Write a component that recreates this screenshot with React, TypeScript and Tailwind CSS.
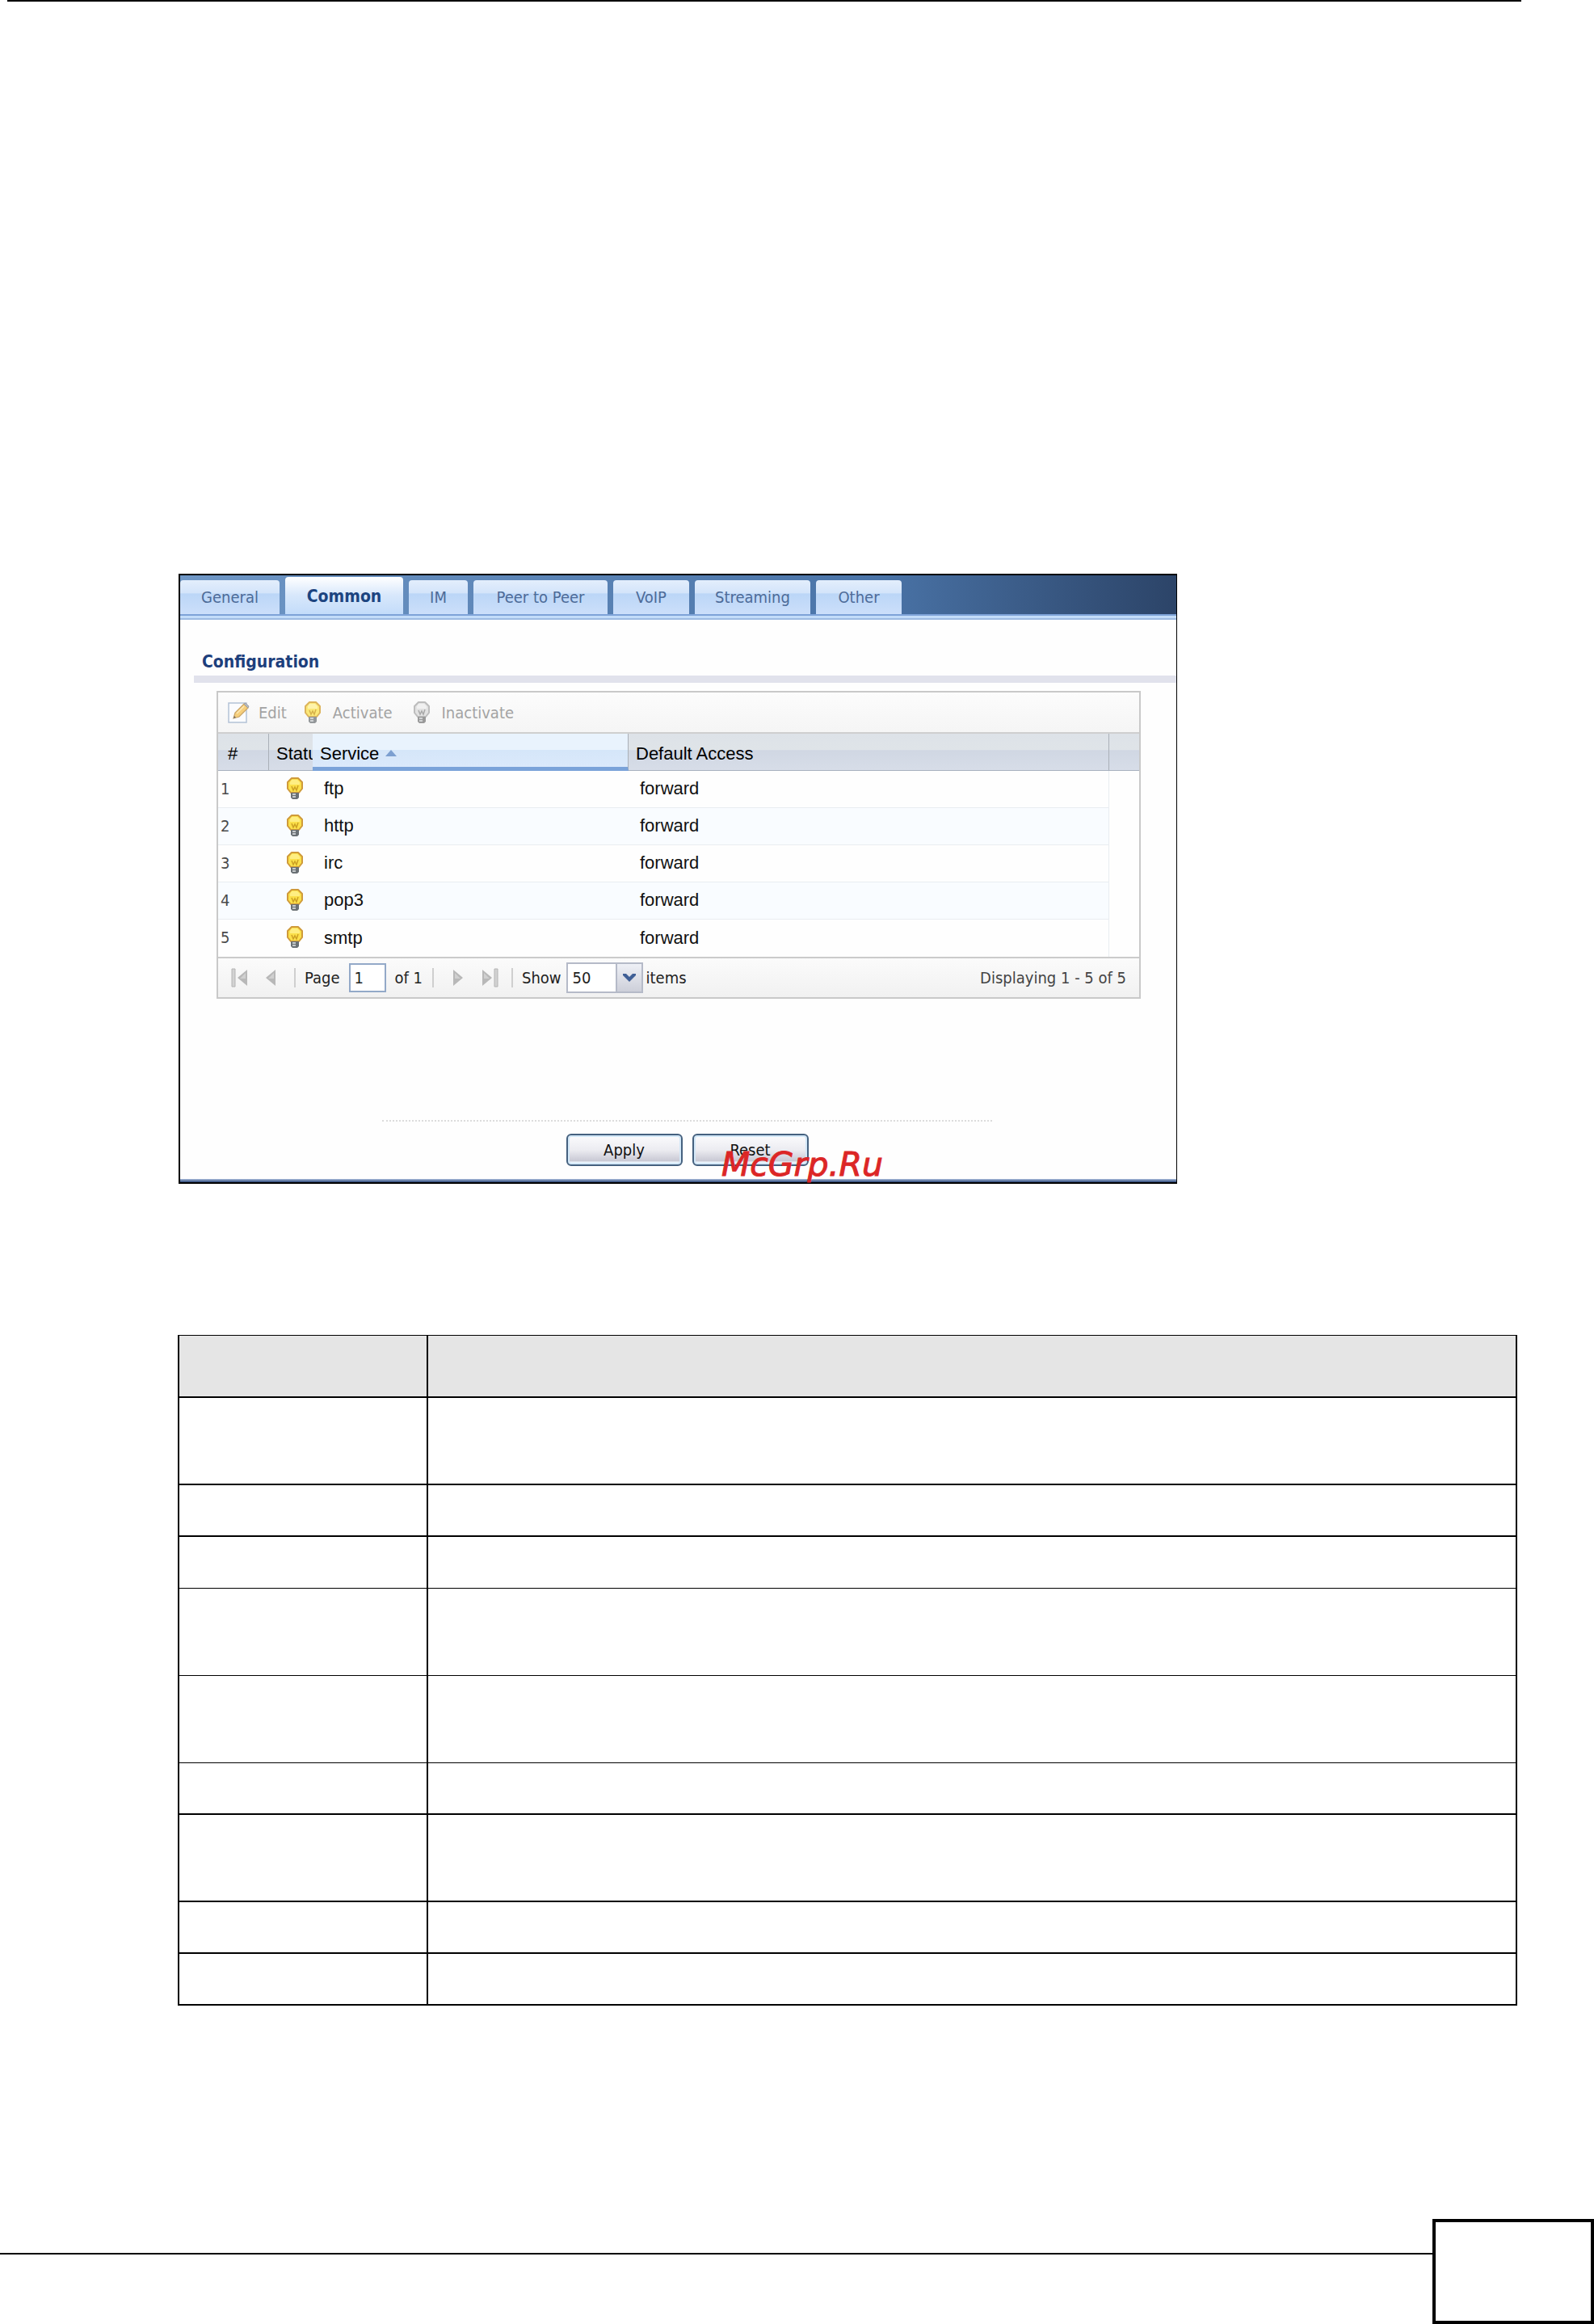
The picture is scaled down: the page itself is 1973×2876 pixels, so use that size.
import { useState } from "react";
import clsx from "clsx";

/* ─── Data ──────────────────────────────────────────────────────────────── */

const TABS = [
  { label: "General", width: "w-[123px]" },
  { label: "Common", width: "w-[146px]" },
  { label: "IM", width: "w-[73px]" },
  { label: "Peer to Peer", width: "w-[166px]" },
  { label: "VoIP", width: "w-[94px]" },
  { label: "Streaming", width: "w-[143px]" },
  { label: "Other", width: "w-[106px]" },
];

const SERVICES = ["ftp", "http", "irc", "pop3", "smtp"];

// row height and rule weight of the description table
const DESCRIPTION_ROWS = [
  "h-[108px] border-b-2",
  "h-16 border-b-2",
  "h-16 border-b",
  "h-[108px] border-b",
  "h-[108px] border-b",
  "h-16 border-b-2",
  "h-[108px] border-b-2",
  "h-16 border-b-2",
  "h-16 border-b-2",
];

const UI_FONT = "font-['DejaVu_Sans_Condensed','DejaVu_Sans',sans-serif]";

/* ─── Icons ─────────────────────────────────────────────────────────────── */

function Bulb({ tone }: { tone: "on" | "dim" | "off" }) {
  const colors = {
    on: { rim: "#cf9a3a", glass: "#fbe04a", shine: "#fff39a", wire: "#cda024", base: "#6a7074" },
    dim: { rim: "#dcb45c", glass: "#fbe878", shine: "#fff8c0", wire: "#d6b04a", base: "#93979a" },
    off: { rim: "#bdbdbd", glass: "#e2e2e2", shine: "#f6f6f6", wire: "#a8a8a8", base: "#9a9a9a" },
  }[tone];

  return (
    <svg width="20" height="28" viewBox="0 0 20 28" aria-hidden="true">
      <path
        d="M6 1h8l5 5v8l-4 5H5l-4-5V6z"
        fill={colors.glass}
        stroke={colors.rim}
        strokeWidth="2"
        strokeLinejoin="round"
      />
      <path d="M6 3h7l3 3v3H4V6z" fill={colors.shine} opacity="0.7" />
      <path d="M6 11l2 5 2-4 2 4 2-6" fill="none" stroke={colors.wire} strokeWidth="1.5" />
      <path d="M5 19h10v6l-2 2H7l-2-2z" fill={colors.base} />
      <path d="M7 21h4M7 24h4" stroke="#e4e6e8" strokeWidth="1.5" />
    </svg>
  );
}

function EditIcon() {
  return (
    <svg width="28" height="28" viewBox="0 0 28 28" aria-hidden="true">
      <path d="M1 2h22v24H1z" fill="#fbfcfe" stroke="#b4c2d6" strokeWidth="1.5" />
      <path d="M7 21l2-7L20 3l5 5-11 11z" fill="#f6cf7c" stroke="#c9a365" strokeWidth="1.2" />
      <path d="M20 3l2-1 4 4-1 2z" fill="#b9bdc4" stroke="#9a9ea6" />
      <path d="M7 21l1-3 2 2z" fill="#6d6d6d" />
      <path d="M11 15l9-9" stroke="#fdeab8" strokeWidth="1.5" />
    </svg>
  );
}

function PageArrow({ bar, flip }: { bar?: boolean; flip?: boolean }) {
  return (
    <svg
      width={bar ? 20 : 12}
      height="24"
      viewBox={bar ? "0 0 20 24" : "8 0 12 24"}
      className={clsx(flip && "-scale-x-100")}
      aria-hidden="true"
    >
      {bar && <path d="M1 1h4v22H1z" fill="#d2d2d2" stroke="#b4b4b4" />}
      <path d="M20 2v20L8 12z" fill="#b8b8b8" />
      <path d="M18 6v7h-7z" fill="#d0d0d0" />
    </svg>
  );
}

function Separator() {
  return <span className="h-6 w-[2px] bg-[#cfcfcf]" />;
}

/* ─── Panel pieces ──────────────────────────────────────────────────────── */

function TabBar() {
  const [active, setActive] = useState("Common");

  return (
    <div className="flex h-[48px] items-end gap-[7px] bg-linear-to-r from-[#6f97c6] via-[#4a74a8] via-70% to-[#2c4468]">
      {TABS.map((tab) => (
        <button
          key={tab.label}
          type="button"
          onClick={() => setActive(tab.label)}
          className={clsx(
            "rounded-t-[4px] text-center leading-[24px]",
            tab.width,
            active === tab.label
              ? "h-[46px] bg-linear-to-b from-white via-[#d7e7fb] to-[#c3dcfa] pt-[2px] text-[21px] font-bold text-[#1c4480]"
              : "h-[42px] bg-[linear-gradient(#e3eefc_0%,#d3e4fa_38%,#bbd6f7_40%,#ccdffa_100%)] text-[20px] text-[#4d6b98]"
          )}
        >
          {tab.label}
        </button>
      ))}
    </div>
  );
}

function Toolbar() {
  return (
    <div className="flex h-[49px] items-center bg-linear-to-b from-[#fcfcfc] to-[#f5f5f5] pl-3 text-[20px] text-[#a3a3a3]">
      <button type="button" className="flex items-center gap-[10px]">
        <EditIcon />
        Edit
      </button>
      <button type="button" className="ml-[22px] flex items-center gap-[15px]">
        <Bulb tone="dim" />
        Activate
      </button>
      <button type="button" className="ml-[26px] flex items-center gap-[15px]">
        <Bulb tone="off" />
        Inactivate
      </button>
    </div>
  );
}

function ServiceTable() {
  const head =
    "border-b border-[#a9b2bf] bg-[linear-gradient(#dde2e8_0%,#dfe4e8_44%,#d0d7e3_46%,#d7dde8_100%)] p-0 pt-[3px] text-left font-normal";
  const divider = "border-r border-r-[#aab0b8]";

  return (
    <table className="w-full table-fixed border-separate border-spacing-0 border-t-2 border-[#cfcfcf] font-['Liberation_Sans',Arial,sans-serif]">
      <colgroup>
        <col className="w-[63px]" />
        <col className="w-[54px]" />
        <col className="w-[391px]" />
        <col />
        <col className="w-[37px]" />
      </colgroup>
      <thead>
        <tr className="h-[46px] text-[22px] text-black">
          <th className={clsx(head, divider, "pl-3 font-bold")}>#</th>
          <th className={clsx(head, "overflow-hidden pl-[9px] whitespace-nowrap")}>Status</th>
          <th
            className={clsx(
              divider,
              "border-b-[5px] border-b-[#7ba3d9] bg-[linear-gradient(#e9f3fd_0%,#e9f3fd_48%,#d5e6f9_50%,#dbe9fb_100%)] p-0 pl-[9px] text-left font-normal"
            )}
          >
            <span className="flex items-center gap-2 pt-[7px]">
              Service
              <svg width="14" height="8" viewBox="0 0 14 8" aria-hidden="true">
                <path d="M7 0l7 8H0z" fill="#7c9fd0" />
              </svg>
            </span>
          </th>
          <th className={clsx(head, divider, "pl-[9px]")}>Default Access</th>
          <th className={head} aria-label="Scroll" />
        </tr>
      </thead>
      <tbody>
        {SERVICES.map((service, i) => (
          <tr
            key={service}
            className={clsx(
              "h-[46px] text-[22px] text-[#111] *:border-b *:border-[#e9edf1] *:p-0 *:pb-[2px] last:*:border-b-0",
              i % 2 === 1 && "*:not-last:bg-[#f9fcff]"
            )}
          >
            <td className="text-[20px] text-[#4a4a4a]">
              <span className={clsx("pl-[3px]", UI_FONT)}>{i + 1}</span>
            </td>
            <td>
              <span className="flex pl-[22px]">
                <Bulb tone="on" />
              </span>
            </td>
            <td>
              <span className="pl-[14px]">{service}</span>
            </td>
            <td className="border-r">
              <span className="pl-[14px]">forward</span>
            </td>
            <td className="border-b-0!" />
          </tr>
        ))}
      </tbody>
    </table>
  );
}

function Pager() {
  return (
    <div className="flex h-[50px] items-center border-t-2 border-[#cbcbcb] bg-linear-to-b from-[#fbfbfb] to-[#f1f1f1] text-[20px] text-[#222]">
      <div className="ml-4 flex items-center gap-[23px]">
        <button type="button" aria-label="First page">
          <PageArrow bar />
        </button>
        <button type="button" aria-label="Previous page">
          <PageArrow />
        </button>
        <Separator />
      </div>
      <label htmlFor="page" className="ml-[11px]">
        Page
      </label>
      <input
        id="page"
        defaultValue="1"
        className="ml-[12px] h-9 w-[46px] border-2 border-[#93a9c8] bg-white pl-1 outline-none"
      />
      <span className="ml-[10px]">of 1</span>
      <div className="ml-3 flex items-center gap-6">
        <Separator />
        <button type="button" aria-label="Next page">
          <PageArrow flip />
        </button>
        <button type="button" aria-label="Last page">
          <PageArrow bar flip />
        </button>
      </div>
      <span className="ml-4 flex">
        <Separator />
      </span>
      <label htmlFor="page-size" className="ml-[11px]">
        Show
      </label>
      <span className="relative ml-[6px] flex">
        <select
          id="page-size"
          defaultValue="50"
          className="h-[38px] w-[95px] appearance-none border-2 border-[#b5bac8] bg-white pl-[6px] outline-none"
        >
          <option>50</option>
          <option>100</option>
        </select>
        <span className="pointer-events-none absolute inset-y-[2px] right-[2px] flex w-8 items-center justify-center border-l-2 border-[#b5bac8] bg-linear-to-b from-[#eef0f6] to-[#cdcfd9]">
          <svg width="18" height="12" viewBox="0 0 18 12" aria-hidden="true">
            <path d="M1 1h4l4 4 4-4h4v2l-8 8-8-8z" fill="#3f5f96" />
          </svg>
        </span>
      </span>
      <span className="ml-1">items</span>
      <span className="mr-4 ml-auto text-[#444]">Displaying 1 - 5 of 5</span>
    </div>
  );
}

function PanelButton({ children }: { children: string }) {
  return (
    <button
      type="button"
      className="h-10 w-36 rounded-[6px] border-2 border-[#45617f] bg-[linear-gradient(#fbfbfd_0%,#ececf1_50%,#c9c9d4_88%,#eef6fd_92%)] text-[20px] text-[#111] shadow-[inset_0_0_0_2px_#d3e8f8]"
    >
      {children}
    </button>
  );
}

/* ─── Page ──────────────────────────────────────────────────────────────── */

export default function App() {
  return (
    <div className="bg-white">
      <div className="mr-[90px] ml-[9px] h-[2px] bg-black" />

      <main className="mt-[708px] mr-[95px] ml-[220px]">
        <section
          className={clsx(
            "relative ml-px w-[1236px] border-2 border-r border-black bg-[#fefefe]",
            UI_FONT
          )}
        >
          <TabBar />
          <div className="h-[7px] border-y-2 border-t-[#7ea3d8] border-b-[#9dbbe2] bg-[#c3dcf9]" />

          <h2 className="mt-[38px] ml-[27px] text-[21px] leading-[28px] font-bold text-[#1d3f7c]">
            Configuration
          </h2>
          <div className="mt-[3px] ml-[17px] h-[9px] bg-[#e1e2ec]" />

          <div className="mt-[10px] mr-[44px] ml-[45px] border-2 border-[#c9c9c9]">
            <Toolbar />
            <ServiceTable />
            <Pager />
          </div>

          <div className="mt-[150px] mr-[228px] ml-[250px] border-t-2 border-dotted border-[#dcdcdc]" />
          <div className="mt-[15px] flex justify-center gap-3 pl-[22px]">
            <PanelButton>Apply</PanelButton>
            <PanelButton>Reset</PanelButton>
          </div>
          <div className="mt-4 h-[4px] bg-linear-to-b from-[#a9bcdc] to-[#2c4675]" />

          <span className="absolute right-[363px] bottom-[-2px] font-['DejaVu_Sans',sans-serif] text-[41px] leading-[48px] text-[#dc2626] italic [-webkit-text-stroke:1px_#dc2626]">
            McGrp.Ru
          </span>
        </section>

        <table className="mt-[187px] w-full table-fixed border-separate border-spacing-0 border-t border-l-2 border-black">
          <colgroup>
            <col className="w-[308px]" />
            <col />
          </colgroup>
          <thead>
            <tr className="*:h-[77px] *:border-r-2 *:border-b-2 *:border-black *:bg-[#e5e5e5] *:p-0">
              <th aria-label="Label" />
              <th aria-label="Description" />
            </tr>
          </thead>
          <tbody>
            {DESCRIPTION_ROWS.map((row, i) => (
              <tr key={i}>
                <td className={clsx("border-r-2 border-black p-0", row)} />
                <td className={clsx("border-r-2 border-black p-0", row)} />
              </tr>
            ))}
          </tbody>
        </table>
      </main>

      <footer className="mt-[264px] flex">
        <div className="mt-[42px] h-[2px] flex-1 bg-black" />
        <div className="h-[130px] w-[200px] border-4 border-black" />
      </footer>
    </div>
  );
}
